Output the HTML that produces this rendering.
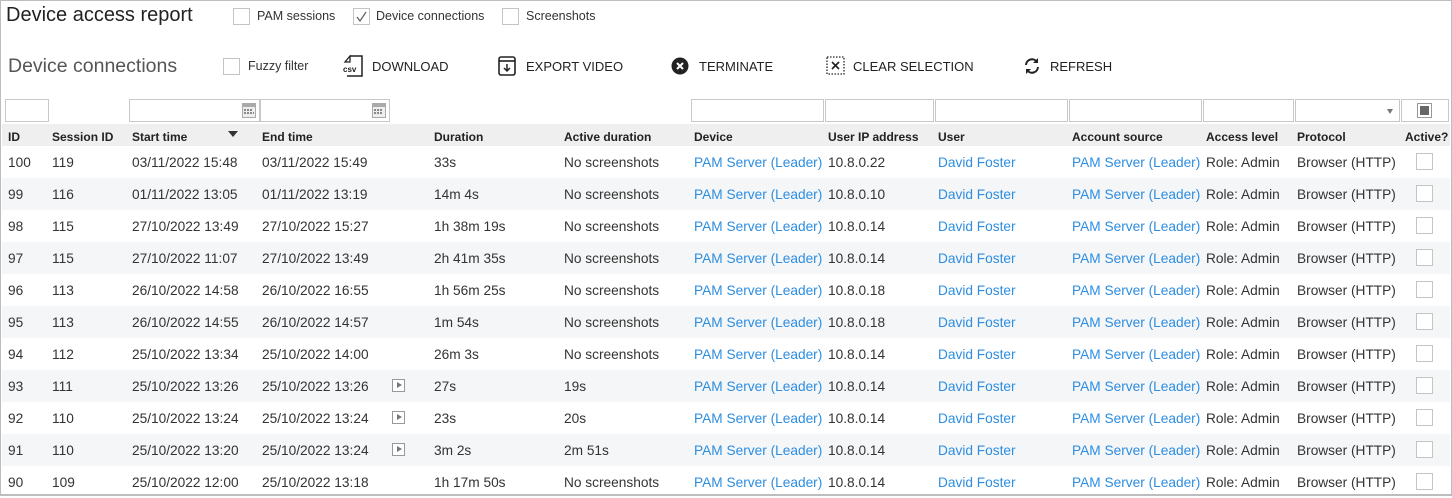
<!DOCTYPE html>
<html><head><meta charset="utf-8"><style>
*{box-sizing:border-box;margin:0;padding:0}
body{width:1452px;height:496px;background:#fff;font-family:"Liberation Sans",sans-serif;color:#333;position:relative;overflow:hidden}
.frame{position:absolute;left:0;top:0;width:1452px;height:496px;border:1px solid #bdbdbd;border-bottom:2px solid #bdbdbd}
.a{position:absolute;white-space:nowrap}
.cb{position:absolute;width:17px;height:17px;border:1px solid #c4c4c4;background:#fff}
.btn{position:absolute;font-size:13px;color:#222;top:59px}
.inp{position:absolute;top:99px;height:23px;border:1px solid #c8c8c8;background:#fff}
.hdr{position:absolute;left:2px;top:124px;width:1448px;height:22px;background:#efefef}
.h{position:absolute;top:130px;font-size:12px;font-weight:bold;color:#222}
.row{position:absolute;left:2px;width:1448px;height:32px}
.row.s{background:#f5f6f7}
.c{position:absolute;top:9px;font-size:13.7px;color:#333;white-space:nowrap}
.l{color:#2d8de0}
.play{position:absolute;top:9px;left:390px;width:13px;height:13px;border:1px solid #999;background:#fff}
.play:after{content:"";position:absolute;left:4px;top:2px;border-left:5px solid #777;border-top:3.5px solid transparent;border-bottom:3.5px solid transparent}
.acb{position:absolute;left:1414px;top:7px;width:17px;height:17px;border:1px solid #c4c4c4;background:#fff}
</style></head><body>
<div class="frame"></div>
<div class="a" style="left:6px;top:4px;font-size:20px;color:#222">Device access report</div>
<div class="cb" style="left:233px;top:8px"></div><div class="a" style="left:257px;top:9px;font-size:12.5px">PAM sessions</div>
<div class="cb" style="left:353px;top:8px"><svg width="15" height="15" style="position:absolute;left:0;top:0"><path d="M3 8 L6 12 L12 3" stroke="#666" stroke-width="1.3" fill="none"/></svg></div><div class="a" style="left:376px;top:9px;font-size:12.5px">Device connections</div>
<div class="cb" style="left:502px;top:8px"></div><div class="a" style="left:526px;top:9px;font-size:12.5px">Screenshots</div>

<div class="a" style="left:8px;top:55px;font-size:19.5px;color:#555">Device connections</div>
<div class="cb" style="left:223px;top:58px"></div><div class="a" style="left:248px;top:59px;font-size:12.5px">Fuzzy filter</div>
<svg class="a" style="left:342px;top:55px" width="22" height="22"><path d="M8 1 H20 V21 H5" fill="none" stroke="#222" stroke-width="1.5"/><path d="M8 1 L3 7 H8 Z" fill="none" stroke="#222" stroke-width="1.3"/><text x="1" y="17" font-size="8" font-weight="bold" font-family="Liberation Sans" fill="#222">csv</text></svg>
<div class="btn" style="left:372px">DOWNLOAD</div>
<svg class="a" style="left:498px;top:56px" width="18" height="20"><rect x="1" y="1" width="16" height="18" rx="2" fill="none" stroke="#222" stroke-width="1.6"/><line x1="1" y1="5" x2="17" y2="5" stroke="#222" stroke-width="1.6"/><path d="M9 8 V15 M6 12 L9 15 L12 12" stroke="#222" stroke-width="1.5" fill="none"/></svg>
<div class="btn" style="left:526px">EXPORT VIDEO</div>
<svg class="a" style="left:671px;top:57px" width="18" height="18"><circle cx="9" cy="9" r="8.5" fill="#222"/><path d="M6 6 L12 12 M12 6 L6 12" stroke="#fff" stroke-width="2"/></svg>
<div class="btn" style="left:699px">TERMINATE</div>
<svg class="a" style="left:826px;top:56px" width="19" height="19"><rect x="1" y="1" width="17" height="17" fill="none" stroke="#222" stroke-width="1.3" stroke-dasharray="1.5 1.5"/><path d="M6 6 L13 13 M13 6 L6 13" stroke="#222" stroke-width="1.6"/></svg>
<div class="btn" style="left:853px">CLEAR SELECTION</div>
<svg class="a" style="left:1023px;top:57px" width="18" height="18"><path d="M3 8 A6 6 0 0 1 14 5 M15 10 A6 6 0 0 1 4 13" fill="none" stroke="#222" stroke-width="2"/><path d="M15 1 V6 H10 Z M3 17 V12 H8 Z" fill="#222"/></svg>
<div class="btn" style="left:1050px">REFRESH</div>

<div class="inp" style="left:5px;width:44px"></div>
<div class="inp" style="left:129px;width:131px"><svg style="position:absolute;right:3px;top:3px" width="14" height="15"><rect x="0" y="0" width="14" height="15" fill="#aaa"/><rect x="1" y="4" width="12" height="10" fill="#eee"/><g fill="#888"><rect x="2" y="6" width="2" height="2"/><rect x="5" y="6" width="2" height="2"/><rect x="8" y="6" width="2" height="2"/><rect x="2" y="9" width="2" height="2"/><rect x="5" y="9" width="2" height="2"/><rect x="8" y="9" width="2" height="2"/><rect x="11" y="9" width="1" height="2"/></g></svg></div>
<div class="inp" style="left:260px;width:130px"><svg style="position:absolute;right:3px;top:3px" width="14" height="15"><rect x="0" y="0" width="14" height="15" fill="#aaa"/><rect x="1" y="4" width="12" height="10" fill="#eee"/><g fill="#888"><rect x="2" y="6" width="2" height="2"/><rect x="5" y="6" width="2" height="2"/><rect x="8" y="6" width="2" height="2"/><rect x="2" y="9" width="2" height="2"/><rect x="5" y="9" width="2" height="2"/><rect x="8" y="9" width="2" height="2"/></g></svg></div>
<div class="inp" style="left:691px;width:133px"></div>
<div class="inp" style="left:825px;width:109px"></div>
<div class="inp" style="left:935px;width:133px"></div>
<div class="inp" style="left:1069px;width:133px"></div>
<div class="inp" style="left:1203px;width:91px"></div>
<div class="inp" style="left:1295px;width:105px"><div style="position:absolute;right:6px;top:9px;border-top:5px solid #777;border-left:3.5px solid transparent;border-right:3.5px solid transparent"></div></div>
<div class="inp" style="left:1401px;width:48px"><div style="position:absolute;left:15px;top:3px;width:15px;height:15px;border:1px solid #999;background:#fff"><div style="margin:2px;width:9px;height:9px;background:#666"></div></div></div>

<div class="hdr"></div>
<div class="h" style="left:8px">ID</div>
<div class="h" style="left:52px">Session ID</div>
<div class="h" style="left:132px">Start time</div>
<div class="a" style="left:228px;top:131px;border-top:6px solid #333;border-left:5px solid transparent;border-right:5px solid transparent"></div>
<div class="h" style="left:262px">End time</div>
<div class="h" style="left:434px">Duration</div>
<div class="h" style="left:564px">Active duration</div>
<div class="h" style="left:694px">Device</div>
<div class="h" style="left:828px">User IP address</div>
<div class="h" style="left:938px">User</div>
<div class="h" style="left:1072px">Account source</div>
<div class="h" style="left:1206px">Access level</div>
<div class="h" style="left:1297px">Protocol</div>
<div class="h" style="left:1405px">Active?</div>

<div class="row" style="top:146px"><div class="c" style="left:6px">100</div><div class="c" style="left:50px">119</div><div class="c" style="left:130px">03/11/2022 15:48</div><div class="c" style="left:260px">03/11/2022 15:49</div><div class="c" style="left:432px">33s</div><div class="c" style="left:562px">No screenshots</div><div class="c l" style="left:692px">PAM Server (Leader)</div><div class="c" style="left:826px">10.8.0.22</div><div class="c l" style="left:936px">David Foster</div><div class="c l" style="left:1070px">PAM Server (Leader)</div><div class="c" style="left:1204px">Role: Admin</div><div class="c" style="left:1295px">Browser (HTTP)</div><div class="acb"></div></div>
<div class="row s" style="top:178px"><div class="c" style="left:6px">99</div><div class="c" style="left:50px">116</div><div class="c" style="left:130px">01/11/2022 13:05</div><div class="c" style="left:260px">01/11/2022 13:19</div><div class="c" style="left:432px">14m 4s</div><div class="c" style="left:562px">No screenshots</div><div class="c l" style="left:692px">PAM Server (Leader)</div><div class="c" style="left:826px">10.8.0.10</div><div class="c l" style="left:936px">David Foster</div><div class="c l" style="left:1070px">PAM Server (Leader)</div><div class="c" style="left:1204px">Role: Admin</div><div class="c" style="left:1295px">Browser (HTTP)</div><div class="acb"></div></div>
<div class="row" style="top:210px"><div class="c" style="left:6px">98</div><div class="c" style="left:50px">115</div><div class="c" style="left:130px">27/10/2022 13:49</div><div class="c" style="left:260px">27/10/2022 15:27</div><div class="c" style="left:432px">1h 38m 19s</div><div class="c" style="left:562px">No screenshots</div><div class="c l" style="left:692px">PAM Server (Leader)</div><div class="c" style="left:826px">10.8.0.14</div><div class="c l" style="left:936px">David Foster</div><div class="c l" style="left:1070px">PAM Server (Leader)</div><div class="c" style="left:1204px">Role: Admin</div><div class="c" style="left:1295px">Browser (HTTP)</div><div class="acb"></div></div>
<div class="row s" style="top:242px"><div class="c" style="left:6px">97</div><div class="c" style="left:50px">115</div><div class="c" style="left:130px">27/10/2022 11:07</div><div class="c" style="left:260px">27/10/2022 13:49</div><div class="c" style="left:432px">2h 41m 35s</div><div class="c" style="left:562px">No screenshots</div><div class="c l" style="left:692px">PAM Server (Leader)</div><div class="c" style="left:826px">10.8.0.14</div><div class="c l" style="left:936px">David Foster</div><div class="c l" style="left:1070px">PAM Server (Leader)</div><div class="c" style="left:1204px">Role: Admin</div><div class="c" style="left:1295px">Browser (HTTP)</div><div class="acb"></div></div>
<div class="row" style="top:274px"><div class="c" style="left:6px">96</div><div class="c" style="left:50px">113</div><div class="c" style="left:130px">26/10/2022 14:58</div><div class="c" style="left:260px">26/10/2022 16:55</div><div class="c" style="left:432px">1h 56m 25s</div><div class="c" style="left:562px">No screenshots</div><div class="c l" style="left:692px">PAM Server (Leader)</div><div class="c" style="left:826px">10.8.0.18</div><div class="c l" style="left:936px">David Foster</div><div class="c l" style="left:1070px">PAM Server (Leader)</div><div class="c" style="left:1204px">Role: Admin</div><div class="c" style="left:1295px">Browser (HTTP)</div><div class="acb"></div></div>
<div class="row s" style="top:306px"><div class="c" style="left:6px">95</div><div class="c" style="left:50px">113</div><div class="c" style="left:130px">26/10/2022 14:55</div><div class="c" style="left:260px">26/10/2022 14:57</div><div class="c" style="left:432px">1m 54s</div><div class="c" style="left:562px">No screenshots</div><div class="c l" style="left:692px">PAM Server (Leader)</div><div class="c" style="left:826px">10.8.0.18</div><div class="c l" style="left:936px">David Foster</div><div class="c l" style="left:1070px">PAM Server (Leader)</div><div class="c" style="left:1204px">Role: Admin</div><div class="c" style="left:1295px">Browser (HTTP)</div><div class="acb"></div></div>
<div class="row" style="top:338px"><div class="c" style="left:6px">94</div><div class="c" style="left:50px">112</div><div class="c" style="left:130px">25/10/2022 13:34</div><div class="c" style="left:260px">25/10/2022 14:00</div><div class="c" style="left:432px">26m 3s</div><div class="c" style="left:562px">No screenshots</div><div class="c l" style="left:692px">PAM Server (Leader)</div><div class="c" style="left:826px">10.8.0.14</div><div class="c l" style="left:936px">David Foster</div><div class="c l" style="left:1070px">PAM Server (Leader)</div><div class="c" style="left:1204px">Role: Admin</div><div class="c" style="left:1295px">Browser (HTTP)</div><div class="acb"></div></div>
<div class="row s" style="top:370px"><div class="c" style="left:6px">93</div><div class="c" style="left:50px">111</div><div class="c" style="left:130px">25/10/2022 13:26</div><div class="c" style="left:260px">25/10/2022 13:26</div><div class="play"></div><div class="c" style="left:432px">27s</div><div class="c" style="left:562px">19s</div><div class="c l" style="left:692px">PAM Server (Leader)</div><div class="c" style="left:826px">10.8.0.14</div><div class="c l" style="left:936px">David Foster</div><div class="c l" style="left:1070px">PAM Server (Leader)</div><div class="c" style="left:1204px">Role: Admin</div><div class="c" style="left:1295px">Browser (HTTP)</div><div class="acb"></div></div>
<div class="row" style="top:402px"><div class="c" style="left:6px">92</div><div class="c" style="left:50px">110</div><div class="c" style="left:130px">25/10/2022 13:24</div><div class="c" style="left:260px">25/10/2022 13:24</div><div class="play"></div><div class="c" style="left:432px">23s</div><div class="c" style="left:562px">20s</div><div class="c l" style="left:692px">PAM Server (Leader)</div><div class="c" style="left:826px">10.8.0.14</div><div class="c l" style="left:936px">David Foster</div><div class="c l" style="left:1070px">PAM Server (Leader)</div><div class="c" style="left:1204px">Role: Admin</div><div class="c" style="left:1295px">Browser (HTTP)</div><div class="acb"></div></div>
<div class="row s" style="top:434px"><div class="c" style="left:6px">91</div><div class="c" style="left:50px">110</div><div class="c" style="left:130px">25/10/2022 13:20</div><div class="c" style="left:260px">25/10/2022 13:24</div><div class="play"></div><div class="c" style="left:432px">3m 2s</div><div class="c" style="left:562px">2m 51s</div><div class="c l" style="left:692px">PAM Server (Leader)</div><div class="c" style="left:826px">10.8.0.14</div><div class="c l" style="left:936px">David Foster</div><div class="c l" style="left:1070px">PAM Server (Leader)</div><div class="c" style="left:1204px">Role: Admin</div><div class="c" style="left:1295px">Browser (HTTP)</div><div class="acb"></div></div>
<div class="row" style="top:466px"><div class="c" style="left:6px">90</div><div class="c" style="left:50px">109</div><div class="c" style="left:130px">25/10/2022 12:00</div><div class="c" style="left:260px">25/10/2022 13:18</div><div class="c" style="left:432px">1h 17m 50s</div><div class="c" style="left:562px">No screenshots</div><div class="c l" style="left:692px">PAM Server (Leader)</div><div class="c" style="left:826px">10.8.0.14</div><div class="c l" style="left:936px">David Foster</div><div class="c l" style="left:1070px">PAM Server (Leader)</div><div class="c" style="left:1204px">Role: Admin</div><div class="c" style="left:1295px">Browser (HTTP)</div><div class="acb"></div></div>
</body></html>
